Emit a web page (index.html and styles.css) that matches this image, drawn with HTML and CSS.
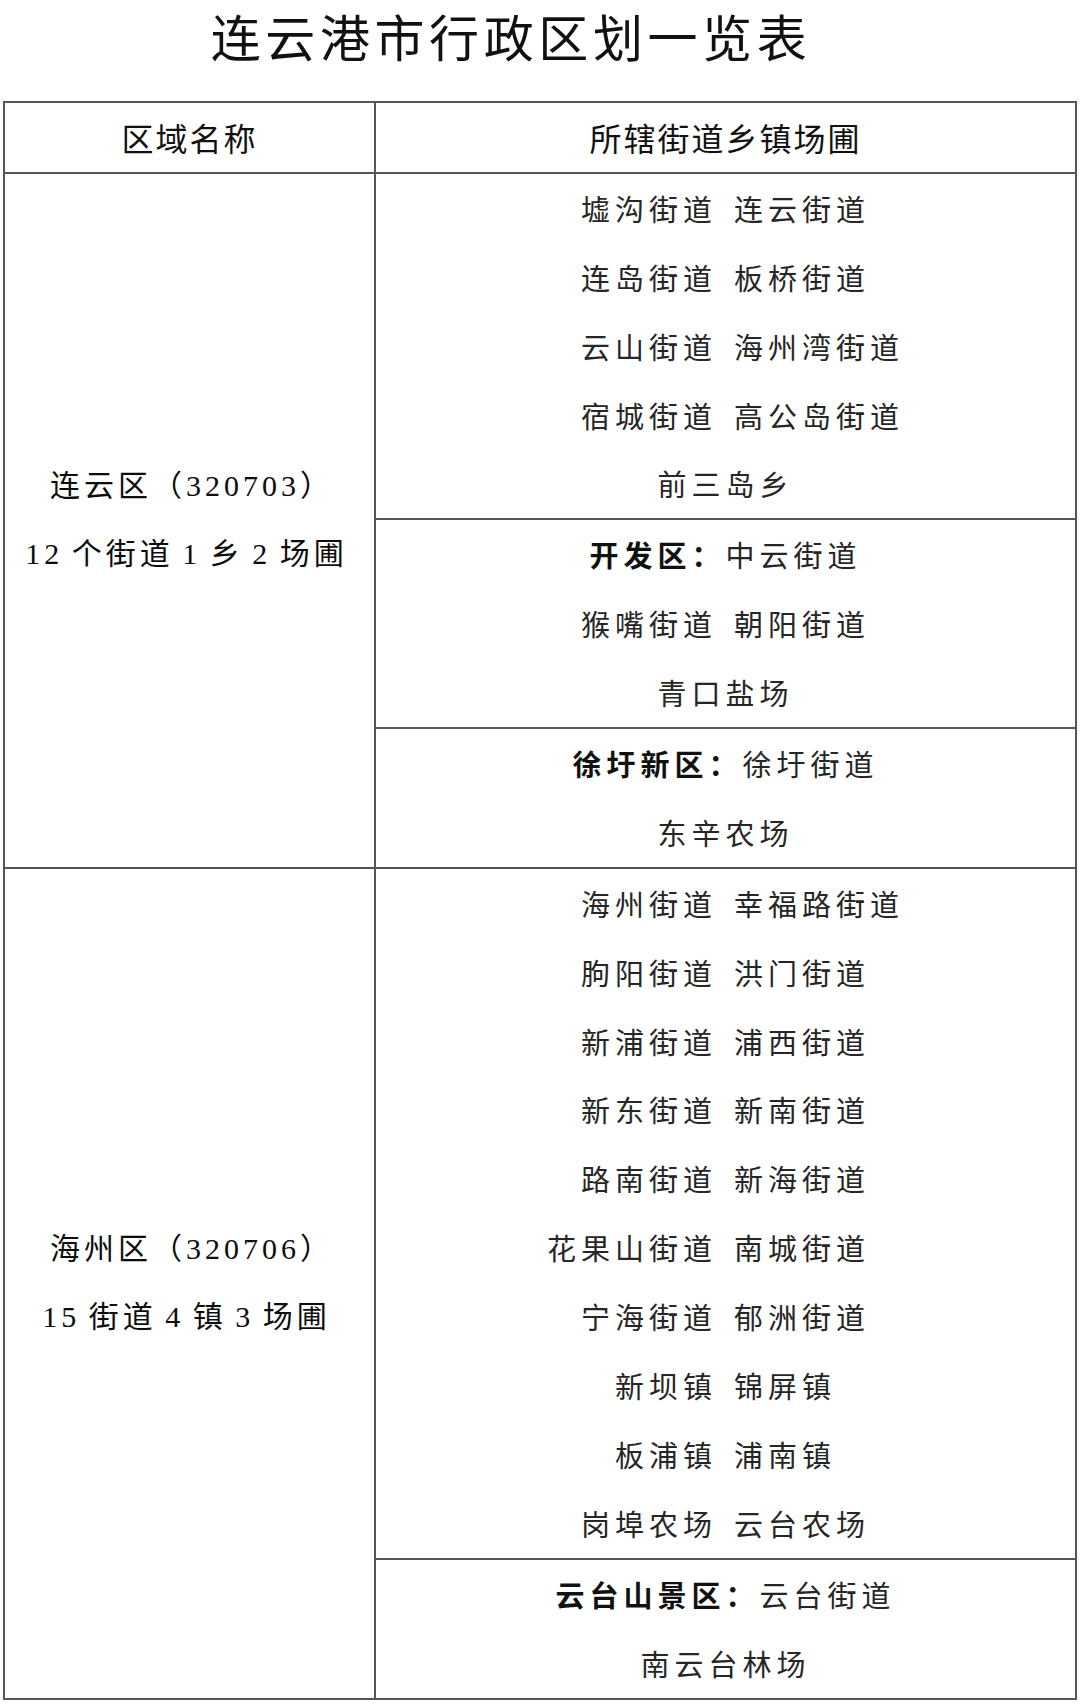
FILE: index.html
```html
<!DOCTYPE html>
<html lang="zh-CN">
<head>
<meta charset="utf-8">
<title>连云港市行政区划一览表</title>
<link rel="stylesheet" href="styles.css">
</head>
<body>
<h1 class="title">连云港市行政区划一览表</h1>
<table class="grid">
  <colgroup><col class="c-name"><col class="c-list"></colgroup>
  <thead>
    <tr><th>区域名称</th><th>所辖街道乡镇场圃</th></tr>
  </thead>
  <tbody>
    <tr>
      <td class="name" rowspan="3">
        <div class="nl nl-code">连云区（320703）</div>
        <div class="nl">12 个街道 1 乡 2 场圃</div>
      </td>
      <td class="list">
        <div class="pair"><span>墟沟街道</span><span>连云街道</span></div>
        <div class="pair"><span>连岛街道</span><span>板桥街道</span></div>
        <div class="pair"><span>云山街道</span><span>海州湾街道</span></div>
        <div class="pair"><span>宿城街道</span><span>高公岛街道</span></div>
        <div class="line">前三岛乡</div>
      </td>
    </tr>
    <tr>
      <td class="list">
        <div class="line"><b>开发区：</b>中云街道</div>
        <div class="pair"><span>猴嘴街道</span><span>朝阳街道</span></div>
        <div class="line">青口盐场</div>
      </td>
    </tr>
    <tr>
      <td class="list">
        <div class="line"><b>徐圩新区：</b>徐圩街道</div>
        <div class="line">东辛农场</div>
      </td>
    </tr>
    <tr>
      <td class="name" rowspan="2">
        <div class="nl nl-code">海州区（320706）</div>
        <div class="nl">15 街道 4 镇 3 场圃</div>
      </td>
      <td class="list">
        <div class="pair"><span>海州街道</span><span>幸福路街道</span></div>
        <div class="pair"><span>朐阳街道</span><span>洪门街道</span></div>
        <div class="pair"><span>新浦街道</span><span>浦西街道</span></div>
        <div class="pair"><span>新东街道</span><span>新南街道</span></div>
        <div class="pair"><span>路南街道</span><span>新海街道</span></div>
        <div class="pair"><span>花果山街道</span><span>南城街道</span></div>
        <div class="pair"><span>宁海街道</span><span>郁洲街道</span></div>
        <div class="pair"><span>新坝镇</span><span>锦屏镇</span></div>
        <div class="pair"><span>板浦镇</span><span>浦南镇</span></div>
        <div class="pair"><span>岗埠农场</span><span>云台农场</span></div>
      </td>
    </tr>
    <tr>
      <td class="list">
        <div class="line"><b>云台山景区：</b>云台街道</div>
        <div class="line">南云台林场</div>
      </td>
    </tr>
  </tbody>
</table>
</body>
</html>
```
FILE: styles.css
```css
html, body {
  margin: 0;
  padding: 0;
  background: #ffffff;
}

body {
  width: 1080px;
  font-family: "Noto Sans CJK SC", sans-serif;
  color: #222;
}

.title {
  margin: 0 0 31px 0;
  padding-right: 58px;
  height: 70px;
  line-height: 70px;
  font-size: 50px;
  font-weight: 400;
  letter-spacing: 4.6px;
  text-align: center;
  color: #111;
}

.grid {
  margin-left: 3px;
  width: 1074px;
  border-collapse: collapse;
  table-layout: fixed;
  border: 2px solid #4a4a4a;
}

.c-name { width: 371px; }

.grid th,
.grid td {
  border: 2px solid #555;
  padding: 0;
  vertical-align: middle;
}

.grid th {
  height: 68.9px;
  line-height: 68.9px;
  font-size: 32px;
  font-weight: 400;
  letter-spacing: 2px;
  color: #111;
  text-align: center;
}

.name {
  text-align: center;
  font-family: "Liberation Serif", "Noto Sans CJK SC", serif;
  font-size: 30px;
  letter-spacing: 4px;
  word-spacing: -3px;
  color: #0d0d0d;
}

.nl {
  line-height: 68px;
  padding-right: 6px;
}

.nl-code {
  padding-right: 0;
  padding-left: 5px;
}

.list {
  font-size: 29px;
  letter-spacing: 5px;
  color: #262626;
}

.pair {
  display: grid;
  grid-template-columns: 1fr 1fr;
  column-gap: 17px;
  height: 68.9px;
  line-height: 68.9px;
}

.pair span:first-child { text-align: right; }
.pair span:last-child { text-align: left; }

.line {
  height: 68.9px;
  line-height: 68.9px;
  text-align: center;
}

.line b {
  font-weight: 700;
  color: #111;
}
```
